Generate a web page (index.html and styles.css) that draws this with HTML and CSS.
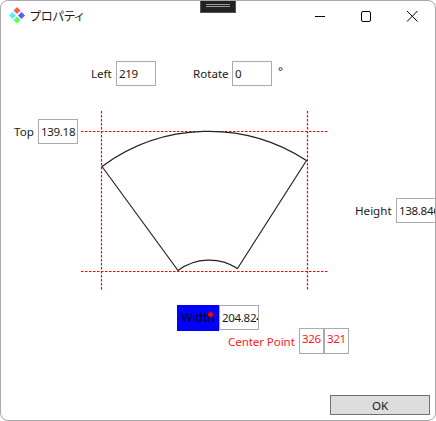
FILE: index.html
```html
<!DOCTYPE html>
<html lang="ja">
<head>
    <meta charset="UTF-8">
    <meta name="viewport" content="width=device-width, initial-scale=1.0">
    <title>プロパティ</title>
    <link rel="stylesheet" href="styles.css">
</head>
<body>
<div class="window">
    <!-- Drag handle over the top edge -->
    <div class="grip"><span></span><span></span></div>

    <header class="titlebar">
        <svg class="app-icon" width="20" height="20" viewBox="0 0 20 20">
            <path d="M10 1l3.500 3.500-3.500 3.500-3.500-3.500z" fill="#ff5a5a"/>
            <path d="M5.500 6l3.500 3.500-3.500 3.500-3.500-3.500z" fill="#55f0ff"/>
            <path d="M14.500 6l3.500 3.500-3.500 3.500-3.500-3.500z" fill="#5a5aff"/>
            <path d="M10 10.500l3.500 3.500-3.500 3.500-3.500-3.500z" fill="#5aff5a"/>
        </svg>
        <span class="title">プロパティ</span>
        <div class="controls">
            <svg width="46" height="30" viewBox="0 0 46 30"><path d="M18 15.500h10" stroke="#000" fill="none"/></svg>
            <svg width="46" height="30" viewBox="0 0 46 30"><rect x="18.500" y="10.500" width="9" height="10" rx="1.500" stroke="#000" fill="none"/></svg>
            <svg width="46" height="30" viewBox="0 0 46 30"><path d="M18 10l10.500 10.500M28.500 10L18 20.500" stroke="#000" fill="none"/></svg>
        </div>
    </header>

    <div class="row-top">
        <label class="field-label left-label">Left</label>
        <div class="box">219</div>
        <label class="field-label rotate-label">Rotate</label>
        <div class="box">0</div>
        <span class="degree">°</span>
    </div>

    <div class="row-mid">
        <div class="top-field">
            <label class="field-label">Top</label>
            <div class="box">139.18</div>
        </div>
        <svg class="canvas" width="247" height="180" viewBox="81 111 247 180">
            <g class="guide">
                <path d="M101.500 111V291"/>
                <path d="M307.500 111V291"/>
                <path d="M81 131.500H328"/>
                <path d="M81 271.500H328"/>
            </g>
            <path class="shape" d="M102 166.500A179 179 0 0 1 306.500 160.500L237.500 268.500A52 52 0 0 0 178 270.500Z"/>
        </svg>
        <div class="height-field">
            <label class="field-label">Height</label>
            <div class="box">138.846</div>
        </div>
    </div>

    <div class="row-width">
        <label class="width-label">Width<i class="dot"></i></label>
        <div class="box">204.824</div>
    </div>

    <div class="row-center">
        <label class="field-label center-label">Center Point</label>
        <div class="box small">326</div>
        <div class="box small">321</div>
    </div>

    <div class="row-ok">
        <button class="ok">OK</button>
    </div>
</div>
</body>
</html>
```

FILE: styles.css
```css
* {
    box-sizing: border-box;
}

html, body {
    margin: 0;
    padding: 0;
    background: #fff;
}

body {
    font-family: "Noto Sans", "Noto Sans CJK JP", sans-serif;
    font-size: 11.6px;
    color: #1a1a1a;
}

/* Window frame */
.window {
    position: relative;
    width: 436px;
    height: 421px;
    overflow: hidden;
    background: #fff;
    border: 1px solid #a8a8a8;
    border-radius: 8px;
}

.grip {
    position: absolute;
    left: 199px;
    top: -1px;
    width: 36px;
    height: 13px;
    padding-top: 4px;
    background: #222;
    border: 1px solid #555;
    border-top: none;
}

.grip span {
    display: block;
    width: 24px;
    height: 1px;
    margin: 0 auto 1px;
    background: #999;
}

/* Title bar */
.titlebar {
    display: flex;
    align-items: center;
    height: 29px;
    padding-left: 6px;
}

.app-icon {
    margin-right: 3px;
}

.title {
    font-family: "Noto Sans CJK JP", sans-serif;
    font-size: 12px;
    font-feature-settings: "palt";
}

.controls {
    display: flex;
    margin-left: auto;
}

/* Form rows */
.box {
    width: 40px;
    height: 25px;
    padding: 0 2px;
    flex: none;
    overflow: hidden;
    line-height: 24px;
    letter-spacing: -0.35px;
    white-space: nowrap;
    background: #fff;
    border: 1px solid #ababab;
}

.box.small {
    width: 25px;
    height: 26px;
    line-height: 20px;
    color: #ff1a1a;
}

.field-label {
    flex: none;
}

.row-top {
    display: flex;
    align-items: center;
    height: 25px;
    margin-top: 31px;
    padding-left: 90px;
}

.left-label {
    width: 25px;
}

.rotate-label {
    width: 39px;
    margin-left: 37px;
}

.degree {
    align-self: flex-start;
    margin: 2px 0 0 6px;
}

.row-mid {
    display: flex;
    margin-top: 25px;
}

.top-field {
    display: flex;
    flex: none;
    align-items: center;
    width: 80px;
    height: 25px;
    margin-top: 8px;
    padding-left: 13px;
}

.top-field .field-label {
    width: 24px;
}

.canvas {
    display: block;
    flex: none;
}

.guide path {
    fill: none;
    stroke: #ff0000;
    stroke-width: 1.2;
    stroke-dasharray: 2.5 1.5;
}

.shape {
    fill: none;
    stroke: #222;
    stroke-width: 1.2;
}

.height-field {
    display: flex;
    flex: none;
    align-items: center;
    height: 25px;
    margin: 87px 0 0 27px;
}

.height-field .field-label {
    width: 41px;
}

.row-width {
    display: flex;
    margin: 14px 0 0 176px;
}

.width-label {
    position: relative;
    width: 42px;
    height: 26px;
    font-size: 12px;
    line-height: 25px;
    text-align: center;
    color: #00001a;
    background: #0000ff;
}

.dot {
    position: absolute;
    left: 31px;
    top: 7px;
    width: 5px;
    height: 5px;
    border-radius: 50%;
    background: #ff0000;
}

.row-center {
    display: flex;
    align-items: center;
    margin: -3px 0 0 227px;
}

.center-label {
    width: 71px;
    letter-spacing: -0.1px;
    color: #ff1a1a;
}

.row-ok {
    display: flex;
    justify-content: flex-end;
    margin-top: 41px;
    padding-right: 5px;
}

.ok {
    width: 100px;
    height: 20px;
    padding: 0;
    font: inherit;
    color: #1a1a1a;
    background: #dddddd;
    border: 1px solid #707070;
}
```
